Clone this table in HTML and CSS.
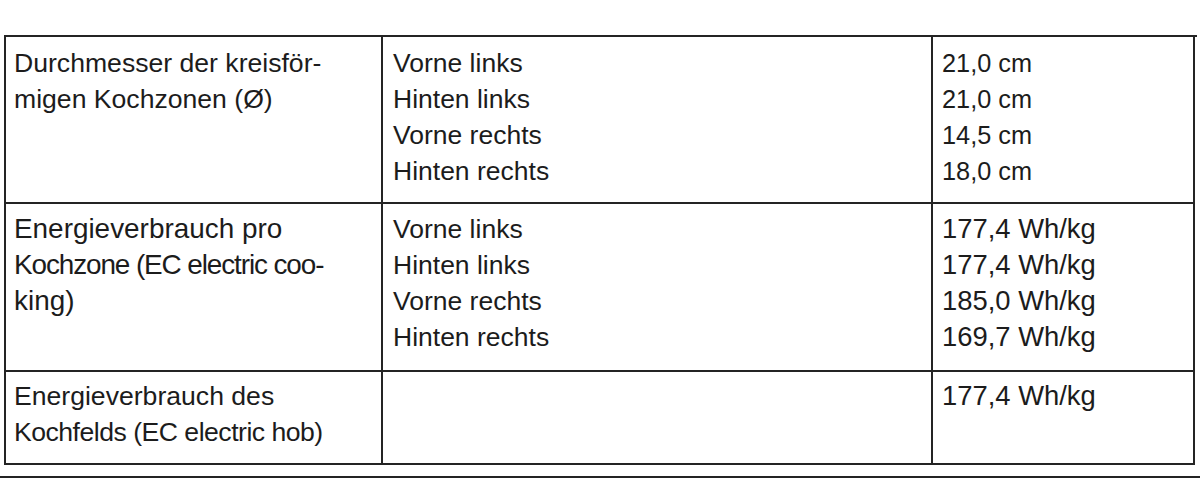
FILE: index.html
```html
<!DOCTYPE html>
<html lang="de">
<head>
<meta charset="utf-8">
<title>Kochfeld Energieverbrauch</title>
<link rel="stylesheet" href="styles.css">
</head>
<body>
<div class="page">
  <div class="table">
    <div class="cell c1 r1 f266">Durchmesser der kreisför-<br>migen Kochzonen (Ø)</div>
    <div class="cell c2 r1 f265">Vorne links<br>Hinten links<br>Vorne rechts<br>Hinten rechts</div>
    <div class="cell c3 r1 f253">21,0 cm<br>21,0 cm<br>14,5 cm<br>18,0 cm</div>

    <div class="cell c1 r2 f278">Energieverbrauch pro<br><span class="tight-a">Kochzone (EC electric coo-</span><br>king)</div>
    <div class="cell c2 r2 f265">Vorne links<br>Hinten links<br>Vorne rechts<br>Hinten rechts</div>
    <div class="cell c3 r2 f274">177,4 Wh/kg<br>177,4 Wh/kg<br>185,0 Wh/kg<br>169,7 Wh/kg</div>

    <div class="cell c1 r3 f266">Energieverbrauch des<br><span class="tight-b">Kochfelds (EC electric hob)</span></div>
    <div class="cell c2 r3 f265"></div>
    <div class="cell c3 r3 f274">177,4 Wh/kg</div>
  </div>
  <div class="rule"></div>
</div>
</body>
</html>
```

FILE: styles.css
```css
html, body {
  margin: 0;
  padding: 0;
  background: #ffffff;
}

.page {
  width: 1200px;
  height: 478px;
  padding-top: 35px;
  box-sizing: border-box;
  font-family: "Liberation Sans", Arial, sans-serif;
  color: #1c1c1c;
}

.table {
  margin-left: 4px;
  width: 1191px;
  display: grid;
  grid-template-columns: 377px 550px 262px;
  grid-template-rows: 167px 168px 93px;
  border-top: 2px solid #242424;
  border-left: 2px solid #242424;
}

.cell {
  border-right: 2px solid #242424;
  border-bottom: 2px solid #242424;
  line-height: 36px;
  white-space: nowrap;
  padding-top: 8px;
  overflow: hidden;
}

.c1 { padding-left: 8px; }
.c2 { padding-left: 10px; }
.c3 { padding-left: 9px; }

.r2 { padding-top: 7px; }
.r3 { padding-top: 6px; }

.f253 { font-size: 25.3px; }
.f265 { font-size: 26.5px; }
.f266 { font-size: 26.6px; }
.f274 { font-size: 27.4px; }
.f278 { font-size: 27.9px; }

.tight-a { letter-spacing: -1.1px; }
.tight-b { letter-spacing: -0.5px; }

.rule {
  margin-top: 11px;
  height: 0;
  border-top: 2px solid #242424;
}
```
